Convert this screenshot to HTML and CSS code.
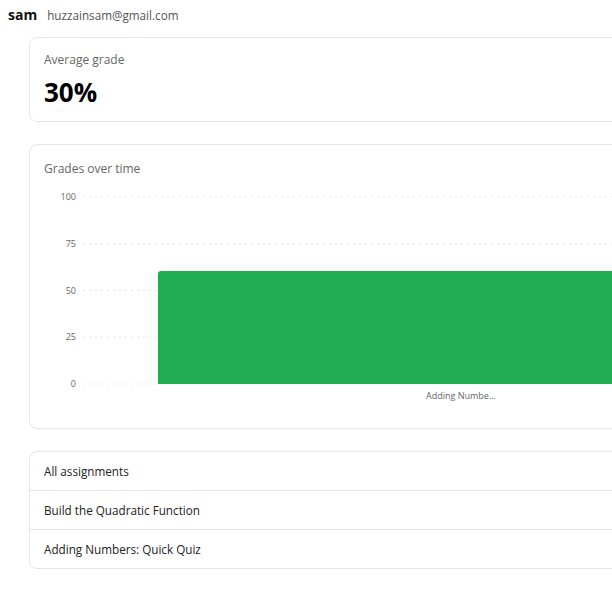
FILE: index.html
```html
<!DOCTYPE html>
<html>
<head>
<meta charset="utf-8">
<link rel="stylesheet" href="styles.css">
</head>
<body>
<div class="page">
<header class="user">
  <span class="user-name">sam</span>
  <span class="user-email">huzzainsam@gmail.com</span>
</header>
<main class="main">
  <section class="card stat">
    <div class="card-label">Average grade</div>
    <div class="stat-value">30%</div>
  </section>
  <section class="card chart-card">
    <div class="card-label">Grades over time</div>
    <svg class="chart" width="820" height="225" viewBox="0 0 820 225">
      <g class="grid">
        <line x1="39" y1="11" x2="795" y2="11"/>
        <line x1="39" y1="57.75" x2="795" y2="57.75"/>
        <line x1="39" y1="104.5" x2="795" y2="104.5"/>
        <line x1="39" y1="151.25" x2="795" y2="151.25"/>
        <line x1="39" y1="198" x2="795" y2="198"/>
      </g>
      <g class="ticks">
        <text x="32" y="14">100</text>
        <text x="32" y="60.75">75</text>
        <text x="32" y="107.5">50</text>
        <text x="32" y="154.25">25</text>
        <text x="32" y="201">0</text>
      </g>
      <path class="bar" d="M114 198 V88 Q114 85 117 85 H717 Q720 85 720 88 V198 Z"/>
      <text class="xlabel" x="417" y="213">Adding Numbe...</text>
    </svg>
  </section>
  <section class="card list">
    <div class="list-row">All assignments</div>
    <div class="list-row">Build the Quadratic Function</div>
    <div class="list-row">Adding Numbers: Quick Quiz</div>
  </section>
</main>
</div>
</body>
</html>
```
FILE: styles.css
```css
html { overflow: hidden; }
body {
  margin: 0;
  font-family: "Open Sans", "Liberation Sans", sans-serif;
  color: #111;
  background: #fff;
}
.page {
  width: 100vw;
  padding: 6px 0 0 8px;
  box-sizing: border-box;
  overflow: hidden;
}
.user {
  display: flex;
  align-items: baseline;
  gap: 10px;
  height: 17px;
  line-height: 17px;
}
.user-name { font-weight: 700; font-size: 14px; }
.user-email { font-size: 11.7px; color: #555; }
.main {
  margin-top: 14px;
  margin-left: 21px;
  width: 840px;
  display: flex;
  flex-direction: column;
  gap: 22px;
  padding-bottom: 8px;
}
.card {
  border: 1px solid #e6e6e6;
  border-radius: 8px;
  background: #fff;
}
.card-label { font-size: 12px; line-height: 16px; color: #666; }
.stat { padding: 14px 14px 13px; height: 56px; }
.stat-value { margin-top: 8px; font-size: 26px; font-weight: 700; line-height: 32px; color: #000; }
.chart-card { padding: 16px 14px 17px; }
.chart { display: block; margin-top: 9px; }
.grid line { stroke: #e4e4e4; stroke-width: 1; stroke-dasharray: 2 4; }
.ticks text { font-size: 9px; fill: #666; text-anchor: end; font-family: "Open Sans", sans-serif; }
.bar { fill: #22ad55; }
.xlabel { font-size: 9px; fill: #666; text-anchor: middle; font-family: "Open Sans", sans-serif; }
.list-row {
  height: 38px;
  line-height: 38px;
  padding: 0 14px;
  font-size: 11.7px;
  color: #222;
  border-top: 1px solid #e6e6e6;
}
.list-row:first-child { border-top: none; }
```
